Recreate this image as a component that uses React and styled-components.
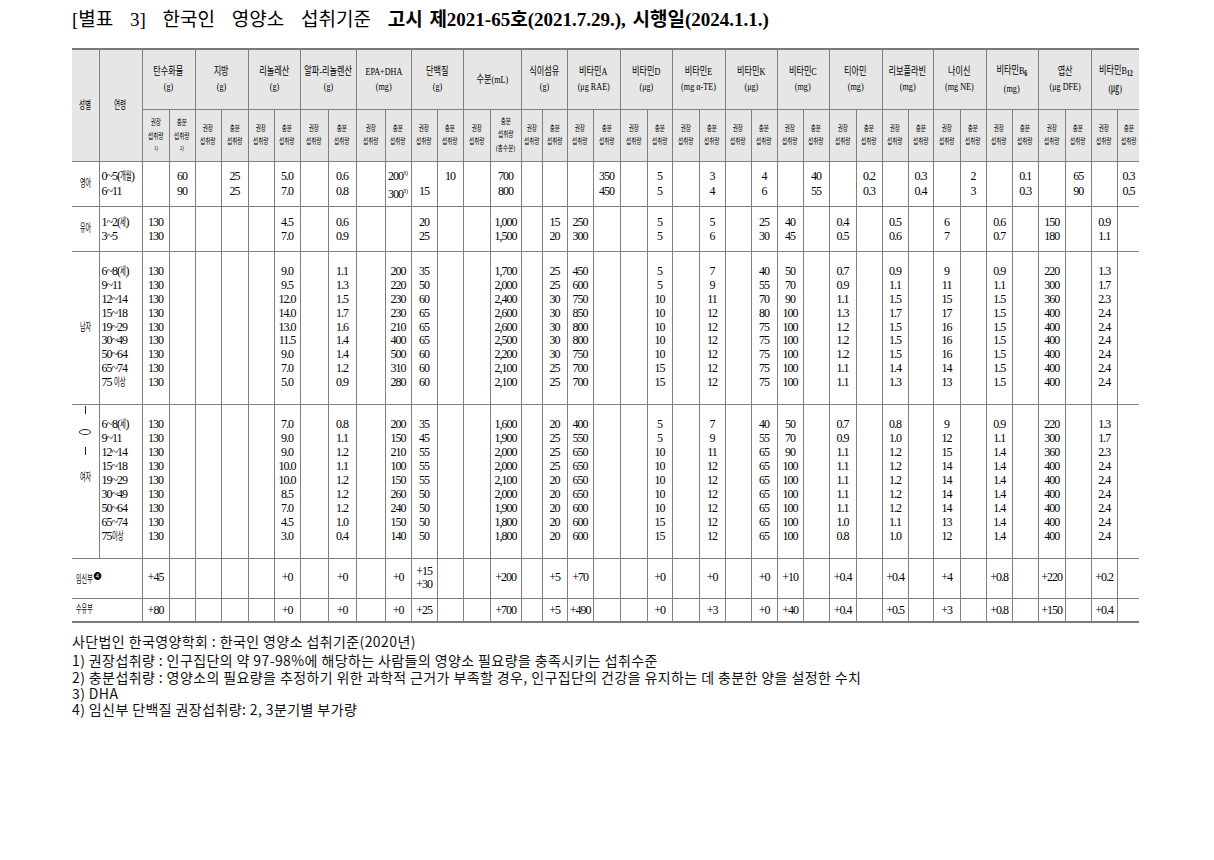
import React from 'react';
import styled, { createGlobalStyle } from 'styled-components';

const LINE = '#808080';

const Global = createGlobalStyle`
  html, body { margin: 0; padding: 0; background: #fff; }
  body { font-family: "Liberation Serif", "Noto Sans CJK KR", serif; color: #000; }
`;

const Page = styled.div`
  width: 1214px;
  min-height: 860px;
  box-sizing: border-box;
  padding: 10px 0 0 72px;
`;

const Title = styled.h1`
  margin: 0 0 18px;
  height: 20px;
  font-size: 19px;
  line-height: 20px;
  font-weight: normal;
  white-space: nowrap;
  font-family: "Liberation Serif", "Noto Sans CJK KR", serif;
  word-spacing: 12px;
`;

const TitleBold = styled.span`
  font-weight: bold;
  word-spacing: 2px;
`;

const Table = styled.table`
  border-collapse: collapse;
  table-layout: fixed;
  width: 1067px;
  border-top: 2px solid #7a7a7a;
  border-bottom: 2px solid #7a7a7a;
`;

const Row = styled.tr`
  height: ${p => p.$h}px;
`;

const Head = styled.th`
  background: #e6e6e6;
  border: 1px solid ${LINE};
  padding: 0;
  font-weight: normal;
  vertical-align: middle;
  overflow: visible;
  &:last-child { border-right: none; }
  ${p => p.$first && 'border-left: none;'}
`;

const HeadText = styled.div`
  display: flex;
  flex-direction: column;
  align-items: center;
  font-size: ${p => p.$fs}px;
  line-height: ${p => p.$lh}px;
`;

const HeadLine = styled.span`
  display: block;
  white-space: nowrap;
  transform: scaleX(${p => p.$sx});
  ${p => p.$small && 'font-size: 7px; line-height: 11px;'}
`;

const Sub = styled.span`
  font-size: 8px;
  font-weight: bold;
  vertical-align: -2px;
`;

const Sup = styled.span`
  font-size: 6px;
  letter-spacing: 0;
  vertical-align: 5px;
`;

const Cell = styled.td`
  border: 1px solid ${LINE};
  padding: 0;
  vertical-align: ${p => (p.$top ? 'top' : 'middle')};
  text-align: ${p => (p.$left ? 'left' : 'center')};
  padding-left: ${p => p.$pl || 0}px;
  font-size: 12px;
  letter-spacing: -1px;
  overflow: visible;
  &:last-child { border-right: none; }
  ${p => p.$first && 'border-left: none;'}
`;

const Lines = styled.div`
  display: flex;
  flex-direction: column;
  align-items: ${p => p.$align || 'center'};
  line-height: ${p => p.$lh || 14}px;
`;

const Line = styled.span`
  display: block;
  white-space: nowrap;
`;

const Ko = styled.span`
  display: inline-block;
  font-family: "Noto Sans CJK KR", sans-serif;
  font-size: ${p => p.$fs || 11}px;
  letter-spacing: 0;
  line-height: 1;
  transform: scaleX(${p => p.$sx || 0.58});
  transform-origin: left center;
  margin-right: ${p => -(p.$n * (1 - (p.$sx || 0.58)))}em;
`;

const GlitchStack = styled.div`
  display: flex;
  flex-direction: column;
  align-items: center;
  padding-top: 1px;
`;

const Bar = styled.span`
  display: block;
  width: 1px;
  height: ${p => p.$h}px;
  background: #222;
  margin-bottom: ${p => p.$mb}px;
`;

const Oval = styled.span`
  display: block;
  width: 10px;
  height: 4px;
  border: 1.3px solid #222;
  border-radius: 50%;
  margin-bottom: 12px;
`;

const Mark = styled.span`
  font-size: 8px;
  vertical-align: 4px;
  margin-left: 2px;
`;

const Notes = styled.div`
  margin-top: 10px;
  font-family: "Noto Sans CJK KR", sans-serif;
  font-size: 14px;
  letter-spacing: 0.4px;
  line-height: 16.3px;
  color: #111;
  white-space: nowrap;
`;

const NoteLine = styled.div`
  margin-bottom: ${p => p.$mb || 0}px;
`;

const WIDTHS = [27, 43, 27, 26, 26, 27, 26, 26, 28, 28, 29, 26, 26, 26, 27, 31, 21, 25, 26, 27, 27, 25, 27, 26, 26, 26, 26, 26, 27, 26, 26, 25, 27, 26, 26, 26, 27, 26, 26, 22];

const NUTRIENTS = [
  { name: ['탄수화물', '(g)'], sub: [['권장', '섭취량', '1)'], ['충분', '섭취량', '2)']] },
  { name: ['지방', '(g)'] },
  { name: ['리놀레산', '(g)'] },
  { name: ['알파-리놀렌산', '(g)'] },
  { name: ['EPA+DHA', '(mg)'] },
  { name: ['단백질', '(g)'] },
  { name: ['수분(mL)'], sub: [['권장', '섭취량'], ['충분', '섭취량', '(총수분)']] },
  { name: ['식이섬유', '(g)'] },
  { name: ['비타민A', '(μg RAE)'] },
  { name: ['비타민D', '(μg)'] },
  { name: ['비타민E', '(mg α-TE)'] },
  { name: ['비타민K', '(μg)'] },
  { name: ['비타민C', '(mg)'] },
  { name: ['티아민', '(mg)'] },
  { name: ['리보플라빈', '(mg)'] },
  { name: ['나이신', '(mg NE)'] },
  { name: [<>비타민B<Sub>6</Sub></>, '(mg)'] },
  { name: ['엽산', '(μg DFE)'] },
  { name: [<>비타민B<Sub>12</Sub></>, '(㎍)'] },
];

const rep = (v, n) => Array.from({ length: n }, () => v);

const GROUPS = [
  {
    sex: '영아', h: 45, lh: 15,
    ages: [<>0~5(<Ko $n={2}>개월</Ko>)</>, '6~11'],
    cols: {
      1: ['60', '90'], 3: ['25', '25'], 5: ['5.0', '7.0'], 7: ['0.6', '0.8'],
      9: [<>200<Sup>3)</Sup></>, <>300<Sup>3)</Sup></>],
      10: ['\u00a0', '15'], 11: ['10', '\u00a0'], 13: ['700', '800'], 17: ['350', '450'],
      19: ['5', '5'], 21: ['3', '4'], 23: ['4', '6'], 25: ['40', '55'], 27: ['0.2', '0.3'],
      29: ['0.3', '0.4'], 31: ['2', '3'], 33: ['0.1', '0.3'], 35: ['65', '90'], 37: ['0.3', '0.5'],
    },
  },
  {
    sex: '유아', h: 45, lh: 14,
    ages: [<>1~2(<Ko $n={1}>세</Ko>)</>, '3~5'],
    cols: {
      0: ['130', '130'], 5: ['4.5', '7.0'], 7: ['0.6', '0.9'], 10: ['20', '25'],
      13: ['1,000', '1,500'], 15: ['15', '20'], 16: ['250', '300'], 19: ['5', '5'],
      21: ['5', '6'], 23: ['25', '30'], 24: ['40', '45'], 26: ['0.4', '0.5'],
      28: ['0.5', '0.6'], 30: ['6', '7'], 32: ['0.6', '0.7'], 34: ['150', '180'], 36: ['0.9', '1.1'],
    },
  },
  {
    sex: '남자', h: 153, lh: 13.9,
    ages: [<>6~8(<Ko $n={1}>세</Ko>)</>, '9~11', '12~14', '15~18', '19~29', '30~49', '50~64', '65~74', <>75 <Ko $n={2}>이상</Ko></>],
    cols: {
      0: rep('130', 9),
      5: ['9.0', '9.5', '12.0', '14.0', '13.0', '11.5', '9.0', '7.0', '5.0'],
      7: ['1.1', '1.3', '1.5', '1.7', '1.6', '1.4', '1.4', '1.2', '0.9'],
      9: ['200', '220', '230', '230', '210', '400', '500', '310', '280'],
      10: ['35', '50', '60', '65', '65', '65', '60', '60', '60'],
      13: ['1,700', '2,000', '2,400', '2,600', '2,600', '2,500', '2,200', '2,100', '2,100'],
      15: ['25', '25', '30', '30', '30', '30', '30', '25', '25'],
      16: ['450', '600', '750', '850', '800', '800', '750', '700', '700'],
      19: ['5', '5', '10', '10', '10', '10', '10', '15', '15'],
      21: ['7', '9', '11', '12', '12', '12', '12', '12', '12'],
      23: ['40', '55', '70', '80', '75', '75', '75', '75', '75'],
      24: ['50', '70', '90', '100', '100', '100', '100', '100', '100'],
      26: ['0.7', '0.9', '1.1', '1.3', '1.2', '1.2', '1.2', '1.1', '1.1'],
      28: ['0.9', '1.1', '1.5', '1.7', '1.5', '1.5', '1.5', '1.4', '1.3'],
      30: ['9', '11', '15', '17', '16', '16', '16', '14', '13'],
      32: ['0.9', '1.1', '1.5', '1.5', '1.5', '1.5', '1.5', '1.5', '1.5'],
      34: ['220', '300', '360', '400', '400', '400', '400', '400', '400'],
      36: ['1.3', '1.7', '2.3', '2.4', '2.4', '2.4', '2.4', '2.4', '2.4'],
    },
  },
  {
    sex: '여자', h: 154, lh: 13.95, glitch: true,
    ages: [<>6~8(<Ko $n={1}>세</Ko>)</>, '9~11', '12~14', '15~18', '19~29', '30~49', '50~64', '65~74', <>75<Ko $n={2}>이상</Ko></>],
    cols: {
      0: rep('130', 9),
      5: ['7.0', '9.0', '9.0', '10.0', '10.0', '8.5', '7.0', '4.5', '3.0'],
      7: ['0.8', '1.1', '1.2', '1.1', '1.2', '1.2', '1.2', '1.0', '0.4'],
      9: ['200', '150', '210', '100', '150', '260', '240', '150', '140'],
      10: ['35', '45', '55', '55', '55', '50', '50', '50', '50'],
      13: ['1,600', '1,900', '2,000', '2,000', '2,100', '2,000', '1,900', '1,800', '1,800'],
      15: ['20', '25', '25', '25', '20', '20', '20', '20', '20'],
      16: ['400', '550', '650', '650', '650', '650', '600', '600', '600'],
      19: ['5', '5', '10', '10', '10', '10', '10', '15', '15'],
      21: ['7', '9', '11', '12', '12', '12', '12', '12', '12'],
      23: ['40', '55', '65', '65', '65', '65', '65', '65', '65'],
      24: ['50', '70', '90', '100', '100', '100', '100', '100', '100'],
      26: ['0.7', '0.9', '1.1', '1.1', '1.1', '1.1', '1.1', '1.0', '0.8'],
      28: ['0.8', '1.0', '1.2', '1.2', '1.2', '1.2', '1.2', '1.1', '1.0'],
      30: ['9', '12', '15', '14', '14', '14', '14', '13', '12'],
      32: ['0.9', '1.1', '1.4', '1.4', '1.4', '1.4', '1.4', '1.4', '1.4'],
      34: ['220', '300', '360', '400', '400', '400', '400', '400', '400'],
      36: ['1.3', '1.7', '2.3', '2.4', '2.4', '2.4', '2.4', '2.4', '2.4'],
    },
  },
];

const EXTRA = [
  {
    label: <><Ko $n={3} $fs={11} $sx={0.55}>임신부</Ko><Mark>❹</Mark></>, h: 40, lh: 13.4,
    cols: {
      0: ['+45'], 5: ['+0'], 7: ['+0'], 9: ['+0'], 10: ['+15', '+30'], 13: ['+200'], 15: ['+5'],
      16: ['+70'], 19: ['+0'], 21: ['+0'], 23: ['+0'], 24: ['+10'], 26: ['+0.4'], 28: ['+0.4'],
      30: ['+4'], 32: ['+0.8'], 34: ['+220'], 36: ['+0.2'],
    },
  },
  {
    label: <Ko $n={3} $fs={11} $sx={0.55}>수유부</Ko>, h: 24, lh: 14,
    cols: {
      0: ['+80'], 5: ['+0'], 7: ['+0'], 9: ['+0'], 10: ['+25'], 13: ['+700'], 15: ['+5'],
      16: ['+490'], 19: ['+0'], 21: ['+3'], 23: ['+0'], 24: ['+40'], 26: ['+0.4'], 28: ['+0.5'],
      30: ['+3'], 32: ['+0.8'], 34: ['+150'], 36: ['+0.4'],
    },
  },
];

function ValueCells({ cols, lh }) {
  return Array.from({ length: 38 }, (_, i) => (
    <Cell key={i}>
      {cols[i] && (
        <Lines $lh={lh}>
          {cols[i].map((v, j) => <Line key={j}>{v}</Line>)}
        </Lines>
      )}
    </Cell>
  ));
}

function SubHead({ lines }) {
  return (
    <Head>
      <HeadText $fs={8.5} $lh={13.4}>
        {lines.map((l, i) => (
          <HeadLine key={i} $sx={0.66} $small={l.endsWith(')') && l.length === 2}>
            {l}
          </HeadLine>
        ))}
      </HeadText>
    </Head>
  );
}

export default function App() {
  return (
    <Page>
      <Global />
      <Title>
        [별표 3] 한국인 영양소 섭취기준 <TitleBold>고시 제2021-65호(2021.7.29.), 시행일(2024.1.1.)</TitleBold>
      </Title>
      <Table>
        <colgroup>
          {WIDTHS.map((w, i) => <col key={i} style={{ width: w }} />)}
        </colgroup>
        <thead>
          <Row $h={60}>
            <Head rowSpan={2} $first>
              <HeadText $fs={11} $lh={15}><HeadLine $sx={0.6}>성별</HeadLine></HeadText>
            </Head>
            <Head rowSpan={2}>
              <HeadText $fs={11} $lh={15}><HeadLine $sx={0.6}>연령</HeadLine></HeadText>
            </Head>
            {NUTRIENTS.map((n, i) => (
              <Head key={i} colSpan={2}>
                <HeadText $fs={11} $lh={15}>
                  {n.name.map((l, j) => <HeadLine key={j} $sx={0.74}>{l}</HeadLine>)}
                </HeadText>
              </Head>
            ))}
          </Row>
          <Row $h={52}>
            {NUTRIENTS.map((n, i) => {
              const sub = n.sub || [['권장', '섭취량'], ['충분', '섭취량']];
              return (
                <React.Fragment key={i}>
                  <SubHead lines={sub[0]} />
                  <SubHead lines={sub[1]} />
                </React.Fragment>
              );
            })}
          </Row>
        </thead>
        <tbody>
          {GROUPS.map((g, gi) => (
            <Row key={gi} $h={g.h}>
              <Cell $first $top={g.glitch}>
                {g.glitch ? (
                  <GlitchStack>
                    <Bar $h={8} $mb={15} />
                    <Oval />
                    <Bar $h={8} $mb={16} />
                    <Ko $n={2} $sx={0.55}>여자</Ko>
                  </GlitchStack>
                ) : (
                  <Ko $n={2} $sx={0.55}>{g.sex}</Ko>
                )}
              </Cell>
              <Cell $left $pl={2}>
                <Lines $lh={g.lh} $align="flex-start">
                  {g.ages.map((a, j) => <Line key={j}>{a}</Line>)}
                </Lines>
              </Cell>
              <ValueCells cols={g.cols} lh={g.lh} />
            </Row>
          ))}
          {EXTRA.map((e, ei) => (
            <Row key={ei} $h={e.h}>
              <Cell $first colSpan={2} $left $pl={4}>{e.label}</Cell>
              <ValueCells cols={e.cols} lh={e.lh} />
            </Row>
          ))}
        </tbody>
      </Table>
      <Notes>
        <NoteLine $mb={3}>사단법인 한국영양학회 : 한국인 영양소 섭취기준(2020년)</NoteLine>
        <NoteLine>1) 권장섭취량 : 인구집단의 약 97-98%에 해당하는 사람들의 영양소 필요량을 충족시키는 섭취수준</NoteLine>
        <NoteLine>2) 충분섭취량 : 영양소의 필요량을 추정하기 위한 과학적 근거가 부족할 경우, 인구집단의 건강을 유지하는 데 충분한 양을 설정한 수치</NoteLine>
        <NoteLine>3) DHA</NoteLine>
        <NoteLine>4) 임신부 단백질 권장섭취량: 2, 3분기별 부가량</NoteLine>
      </Notes>
    </Page>
  );
}
